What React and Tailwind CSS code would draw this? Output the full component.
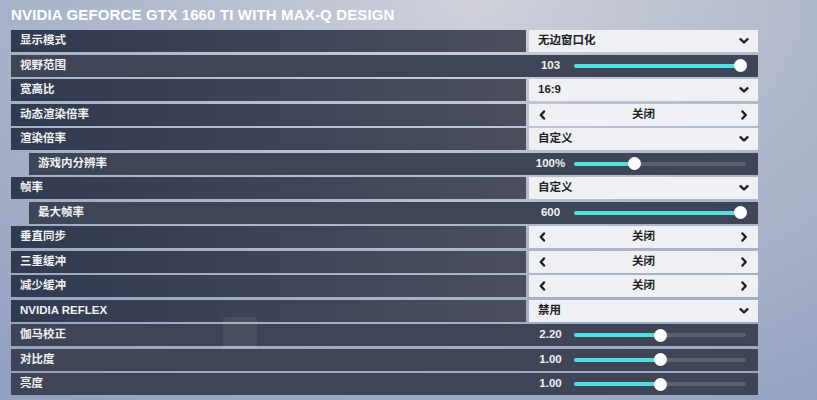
import React from 'react';

const FONT = { fontFamily: '"Liberation Sans","Noto Sans CJK SC",sans-serif' };

const ROWS = [
    { label: '显示模式', type: 'select', value: '无边窗口化' },
    { label: '视野范围', type: 'slider', value: '103', pct: 1 },
    { label: '宽高比', type: 'select', value: '16:9' },
    { label: '动态渲染倍率', type: 'toggle', value: '关闭' },
    { label: '渲染倍率', type: 'select', value: '自定义' },
    { label: '游戏内分辨率', type: 'slider', value: '100%', pct: 0.34, sub: true },
    { label: '帧率', type: 'select', value: '自定义' },
    { label: '最大帧率', type: 'slider', value: '600', pct: 1, sub: true },
    { label: '垂直同步', type: 'toggle', value: '关闭' },
    { label: '三重缓冲', type: 'toggle', value: '关闭' },
    { label: '减少缓冲', type: 'toggle', value: '关闭' },
    { label: 'NVIDIA REFLEX', type: 'select', value: '禁用' },
    { label: '伽马校正', type: 'slider', value: '2.20', pct: 0.5 },
    { label: '对比度', type: 'slider', value: '1.00', pct: 0.5 },
    { label: '亮度', type: 'slider', value: '1.00', pct: 0.5 },
];

function Chevron({ dir }) {
    const d = dir === 'down' ? 'M1.5 3.2 L5 6.5 L8.5 3.2' : dir === 'left' ? 'M6 1.5 L2.8 5 L6 8.5' : 'M3.5 1.5 L6.7 5 L3.5 8.5';
    return (
        <svg width="10" height="10" viewBox="0 0 10 10">
            <path d={d} fill="none" stroke="#1b1d22" strokeWidth="2.4" strokeLinecap="round" strokeLinejoin="round" />
        </svg>
    );
}

function Slider({ pct }) {
    // thumb centre travels 6px in from each end of the track
    const left = 6 + pct * 160;
    return (
        <div className="relative w-[172px] h-[13px] flex items-center">
            <div className="w-full h-[4px] rounded-full bg-[#5b6070]" />
            <div className="absolute left-0 h-[4px] rounded-full bg-[#4fe0e2]" style={{ width: left }} />
            <div className="absolute w-[13px] h-[13px] rounded-full bg-white" style={{ left: left - 6.5 }} />
        </div>
    );
}

function Row({ row }) {
    const labelCls = 'flex items-center h-full pl-[9px] text-[11.5px] font-bold text-[#f1f2f4]';

    if (row.type === 'slider') {
        return (
            <div className={`flex items-center h-[22px] bg-[#3f4557] ${row.sub ? 'ml-[18px]' : ''}`}>
                <div className={`${labelCls} flex-1`}>{row.label}</div>
                <div className="w-[229px] flex items-center">
                    <span className="w-[43px] text-center text-[11.5px] font-bold text-[#f1f2f4]">{row.value}</span>
                    <div className="ml-[2px]">
                        <Slider pct={row.pct} />
                    </div>
                </div>
            </div>
        );
    }

    return (
        <div className="flex h-[22px] gap-[3px]">
            <div className={`${labelCls} flex-1 bg-[linear-gradient(90deg,#323a4f,#40465a_60%,#4a4e5d)]`}>{row.label}</div>
            <div className="w-[229px] h-full bg-[#eef0f4] flex items-center px-[9px] text-[11.5px] font-bold text-[#1d1f24]">
                {row.type === 'select' && (
                    <>
                        <span className="flex-1">{row.value}</span>
                        <Chevron dir="down" />
                    </>
                )}
                {row.type === 'toggle' && (
                    <>
                        <Chevron dir="left" />
                        <span className="flex-1 text-center">{row.value}</span>
                        <Chevron dir="right" />
                    </>
                )}
            </div>
        </div>
    );
}

export default function App() {
    return (
        <div
            className="relative w-[817px] h-[400px] overflow-hidden bg-[radial-gradient(ellipse_90%_120%_at_58%_0%,#d0d1db_0%,#b1b9cc_45%,#93a1c1_100%)]"
            style={FONT}
        >
            <div className="pl-[11px] pt-[6px] w-[758px]">
                <h1 className="h-[22px] text-[15px] font-bold text-white tracking-[0.15px] leading-[18px]">
                    NVIDIA GEFORCE GTX 1660 TI WITH MAX-Q DESIGN
                </h1>
                <div className="mt-[2px] flex flex-col gap-[2.5px]">
                    {ROWS.map((r, i) => (
                        <Row key={i} row={r} />
                    ))}
                </div>
            </div>
            <div className="absolute left-[223px] top-[317px] w-[34px] h-[32px] bg-white/[0.06]" />
        </div>
    );
}
